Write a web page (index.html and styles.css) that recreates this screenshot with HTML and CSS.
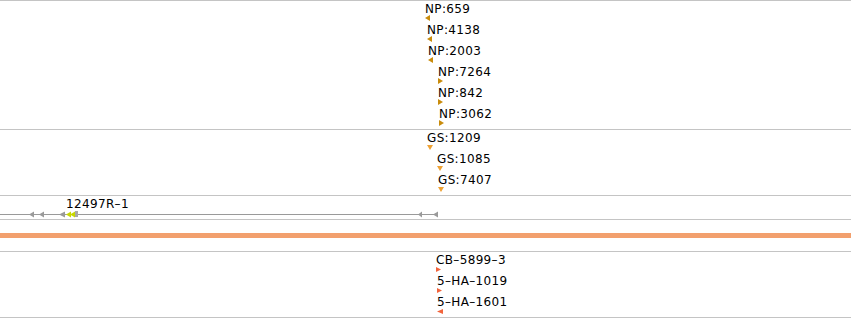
FILE: index.html
```html
<!DOCTYPE html>
<html>
<head>
<meta charset="utf-8">
<link rel="stylesheet" href="styles.css">
</head>
<body>
<div class="browser">
  <div class="track t-np">
    <div class="feat" style="left:425px;top:1px"><span class="lbl">NP:659</span><svg class="tri np" width="5" height="6"><polygon points="0,3 5,0 5,6"/></svg></div>
    <div class="feat" style="left:427px;top:22px"><span class="lbl">NP:4138</span><svg class="tri np" width="5" height="6"><polygon points="0,3 5,0 5,6"/></svg></div>
    <div class="feat" style="left:428px;top:43px"><span class="lbl">NP:2003</span><svg class="tri np" width="5" height="6"><polygon points="0,3 5,0 5,6"/></svg></div>
    <div class="feat" style="left:438px;top:64px"><span class="lbl">NP:7264</span><svg class="tri np" width="5" height="6"><polygon points="0,0 5,3 0,6"/></svg></div>
    <div class="feat" style="left:438px;top:85px"><span class="lbl">NP:842</span><svg class="tri np" width="5" height="6"><polygon points="0,0 5,3 0,6"/></svg></div>
    <div class="feat" style="left:439px;top:106px"><span class="lbl">NP:3062</span><svg class="tri np" width="5" height="6"><polygon points="0,0 5,3 0,6"/></svg></div>
  </div>
  <div class="track t-gs">
    <div class="feat" style="left:427px;top:1px"><span class="lbl">GS:1209</span><svg class="tri gs down" width="6" height="5"><polygon points="0,0 6,0 3,5"/></svg></div>
    <div class="feat" style="left:437px;top:22px"><span class="lbl">GS:1085</span><svg class="tri gs down" width="6" height="5"><polygon points="0,0 6,0 3,5"/></svg></div>
    <div class="feat" style="left:438px;top:43px"><span class="lbl">GS:7407</span><svg class="tri gs down" width="6" height="5"><polygon points="0,0 6,0 3,5"/></svg></div>
  </div>
  <div class="track t-gene">
    <svg class="gene-canvas" width="851" height="23">
      <line class="gene-line" x1="0" y1="18.5" x2="436" y2="18.5"/>
      <polygon class="gene-arrow" points="29,18.5 34,15.5 34,21.5"/>
      <polygon class="gene-arrow" points="39,18.5 44,15.5 44,21.5"/>
      <polygon class="gene-arrow" points="59,18.5 65,15.5 65,21.5"/>
      <rect class="gene-end" x="75" y="15" width="3" height="6"/>
      <polygon class="gene-hit" points="70,18.5 75,15.5 75,21.5"/>
      <polygon class="gene-hit" points="66,18.5 71,15.5 71,21.5"/>
      <polygon class="gene-arrow" points="418,18.5 422,15.5 422,21.5"/>
      <polygon class="gene-arrow" points="433,18.5 438,15.5 438,21.5"/>
    </svg>
    <div class="feat" style="left:66px;top:1px"><span class="lbl">12497R–1</span></div>
  </div>
  <div class="band-wrap"><div class="band"></div></div>
  <div class="track t-cb">
    <div class="feat" style="left:436px;top:1px"><span class="lbl">CB–5899–3</span><svg class="tri cb gap" width="5" height="5"><polygon points="0,0 5,2.5 0,5"/></svg></div>
    <div class="feat" style="left:437px;top:22px"><span class="lbl">5–HA–1019</span><svg class="tri cb gap" width="5" height="5"><polygon points="0,0 5,2.5 0,5"/></svg></div>
    <div class="feat" style="left:437px;top:43px"><span class="lbl">5–HA–1601</span><svg class="tri cb gap" width="6" height="5"><polygon points="0,2.5 6,0 6,5"/></svg></div>
  </div>
</div>
</body>
</html>
```
FILE: styles.css
```css
html, body {
  margin: 0;
  padding: 0;
  background: #ffffff;
}
body {
  font-family: "DejaVu Sans", "Noto Sans", sans-serif;
  font-size: 12px;
  color: #000000;
}
.browser {
  width: 851px;
  display: flex;
  flex-direction: column;
}
.track {
  position: relative;
  border-top: 1px solid #c4c4c4;
}
.t-np { height: 128px; }
.t-gs { height: 65px; }
.t-gene {
  height: 23px;
  border-bottom: 1px solid #c4c4c4;
}
.t-cb {
  height: 65px;
  border-bottom: 1px solid #c4c4c4;
}
.band-wrap {
  padding: 13px 0;
}
.band {
  height: 5px;
  background: #f2a06e;
}
.feat {
  position: absolute;
  display: flex;
  flex-direction: column;
  align-items: flex-start;
}
.lbl {
  display: block;
  line-height: 12px;
  padding-top: 1px;
  white-space: nowrap;
  letter-spacing: 0.35px;
}
.tri {
  display: block;
}
.tri.down,
.tri.gap {
  margin-top: 1px;
}
.np polygon { fill: #c98c0c; }
.gs polygon { fill: #eea235; }
.cb polygon { fill: #f2643c; }
.gene-canvas {
  position: absolute;
  left: 0;
  top: 0;
}
.gene-line {
  stroke: #9a9a9a;
  stroke-width: 1;
}
.gene-arrow { fill: #9a9a9a; }
.gene-end { fill: #a8a8a8; }
.gene-hit { fill: #c8d800; }
```
